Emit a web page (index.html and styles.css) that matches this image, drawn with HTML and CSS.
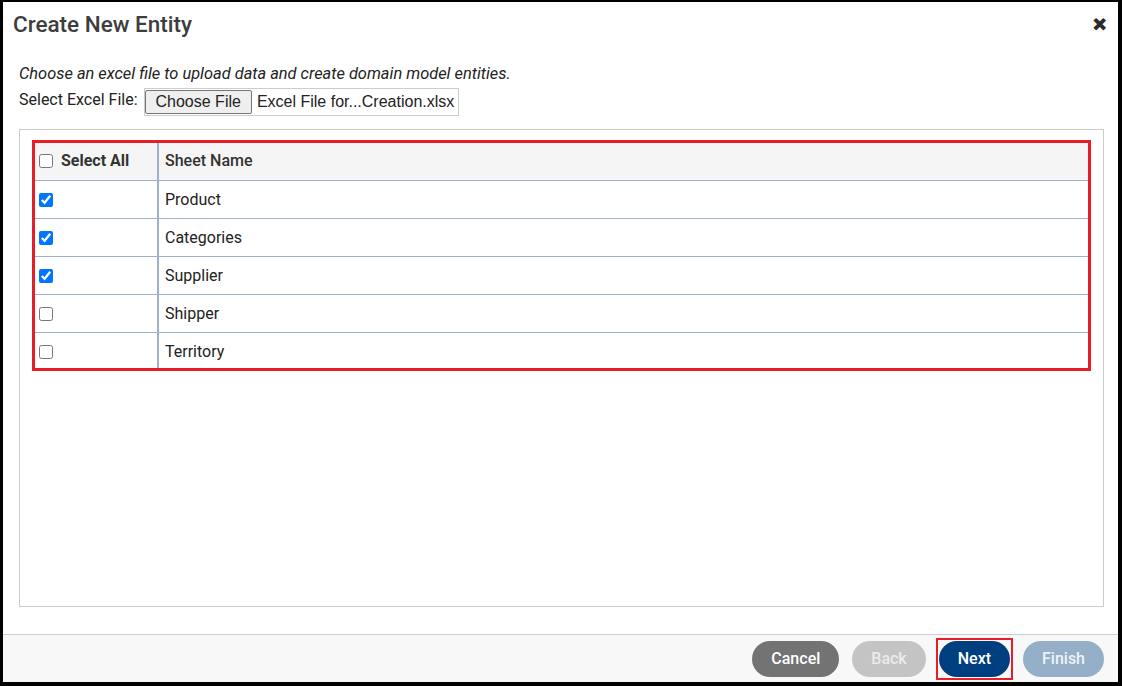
FILE: index.html
```html
<!DOCTYPE html>
<html lang="en">
<head>
    <meta charset="UTF-8">
    <title>Create New Entity</title>
    <link rel="stylesheet" href="styles.css">
</head>
<body>
    <div class="dialog">
        <div class="dialog-header">
            <h2>Create New Entity</h2>
            <span class="close">&#x2715;</span>
        </div>

        <div class="dialog-body">
            <p class="hint">Choose an excel file to upload data and create domain model entities.</p>
            <div class="file-row">
                <label>Select Excel File:</label>
                <div class="file-input">
                    <span class="file-btn">Choose File</span>
                    <span class="file-name">Excel File for...Creation.xlsx</span>
                </div>
            </div>

            <div class="panel">
                <table class="sheets">
                    <thead>
                        <tr>
                            <th class="col-check"><input type="checkbox"> Select All</th>
                            <th class="col-name">Sheet Name</th>
                        </tr>
                    </thead>
                    <tbody>
                        <tr><td><input type="checkbox" checked></td><td>Product</td></tr>
                        <tr><td><input type="checkbox" checked></td><td>Categories</td></tr>
                        <tr><td><input type="checkbox" checked></td><td>Supplier</td></tr>
                        <tr><td><input type="checkbox"></td><td>Shipper</td></tr>
                        <tr><td><input type="checkbox"></td><td>Territory</td></tr>
                    </tbody>
                </table>
            </div>
        </div>

        <div class="dialog-footer">
            <button class="btn btn-cancel">Cancel</button>
            <button class="btn btn-back">Back</button>
            <span class="highlight"><button class="btn btn-next">Next</button></span>
            <button class="btn btn-finish">Finish</button>
        </div>
    </div>
</body>
</html>
```

FILE: styles.css
```css
html, body {
    margin: 0;
    padding: 0;
    background: #000;
}

body {
    font-family: Roboto, "Liberation Sans", sans-serif;
    color: #222;
    height: 686px;
    overflow: hidden;
}

.dialog {
    margin: 2px 4px 0 3px;
    height: 680px;
    background: white;
    display: flex;
    flex-direction: column;
}

.dialog-header {
    display: flex;
    justify-content: space-between;
    align-items: center;
    height: 44px;
    padding: 0 12px 0 10px;
}

.dialog-header h2 {
    margin: 0;
    font-size: 22.5px;
    font-weight: 500;
    color: #3d3d3d;
}

.close {
    font-size: 16px;
    font-weight: bold;
    color: #2a2a2a;
    -webkit-text-stroke: 1.6px #2a2a2a;
}

.dialog-body {
    flex: 1;
    padding: 18px 14px 0 16px;
}

.hint {
    margin: 0 0 5px;
    font-size: 16.4px;
    font-style: italic;
    color: #222;
}

.file-row {
    display: flex;
    align-items: center;
    gap: 6px;
    font-size: 16px;
}

.file-row label {
    align-self: flex-start;
    margin-top: 2px;
}

.file-input {
    display: flex;
    align-items: center;
    height: 26px;
    border: 1px solid #ccc;
    padding-right: 4px;
}

.file-btn {
    font-family: "Liberation Sans", Arial, sans-serif;
    font-size: 16px;
    background: #efefef;
    border: 1px solid #767676;
    border-radius: 2px;
    padding: 2px 10px;
    margin-right: 5px;
}

.file-name {
    font-family: "Liberation Sans", Arial, sans-serif;
    font-size: 16px;
}

.panel {
    margin-top: 13px;
    height: 465px;
    border: 1px solid #ccc;
    padding: 11px 13px 0 13px;
}

.sheets {
    width: 100%;
    border-collapse: collapse;
    outline: 3px solid #e61e28;
    outline-offset: -2px;
    font-size: 16px;
}

.sheets th, .sheets td {
    height: 37px;
    padding: 0 6px;
    text-align: left;
    border-bottom: 1px solid #9fb2c9;
}

.sheets th {
    background: #f5f5f5;
    font-weight: 500;
    color: #333;
    height: 39px;
}

.sheets .col-check {
    width: 112px;
    font-weight: bold;
}

.sheets td:first-child, .sheets th:first-child {
    border-right: 2px solid #9fb2c9;
}

.sheets tbody tr:last-child td {
    border-bottom: none;
}

.sheets input[type="checkbox"] {
    width: 14px;
    height: 14px;
    margin: 0 4px 0 0;
    vertical-align: -2px;
}

.dialog-footer {
    height: 47px;
    border-top: 1px solid #ccc;
    background: #f8f8f8;
    display: flex;
    justify-content: flex-end;
    align-items: center;
    gap: 13px;
    padding-right: 14px;
}

.btn {
    height: 36px;
    border: none;
    border-radius: 18px;
    padding: 0 19px;
    font-family: Roboto, sans-serif;
    font-size: 16px;
    font-weight: 500;
    color: white;
}

.btn-cancel {
    background: #737373;
}

.btn-back {
    background: #c4c4c4;
    color: #ececec;
}

.btn-next {
    background: #003f7f;
}

.btn-finish {
    background: #95afc9;
    color: #eef2f6;
}

.highlight {
    display: flex;
    border: 2px solid #e61e28;
    padding: 1px;
    margin: 0 -3px;
}
```
